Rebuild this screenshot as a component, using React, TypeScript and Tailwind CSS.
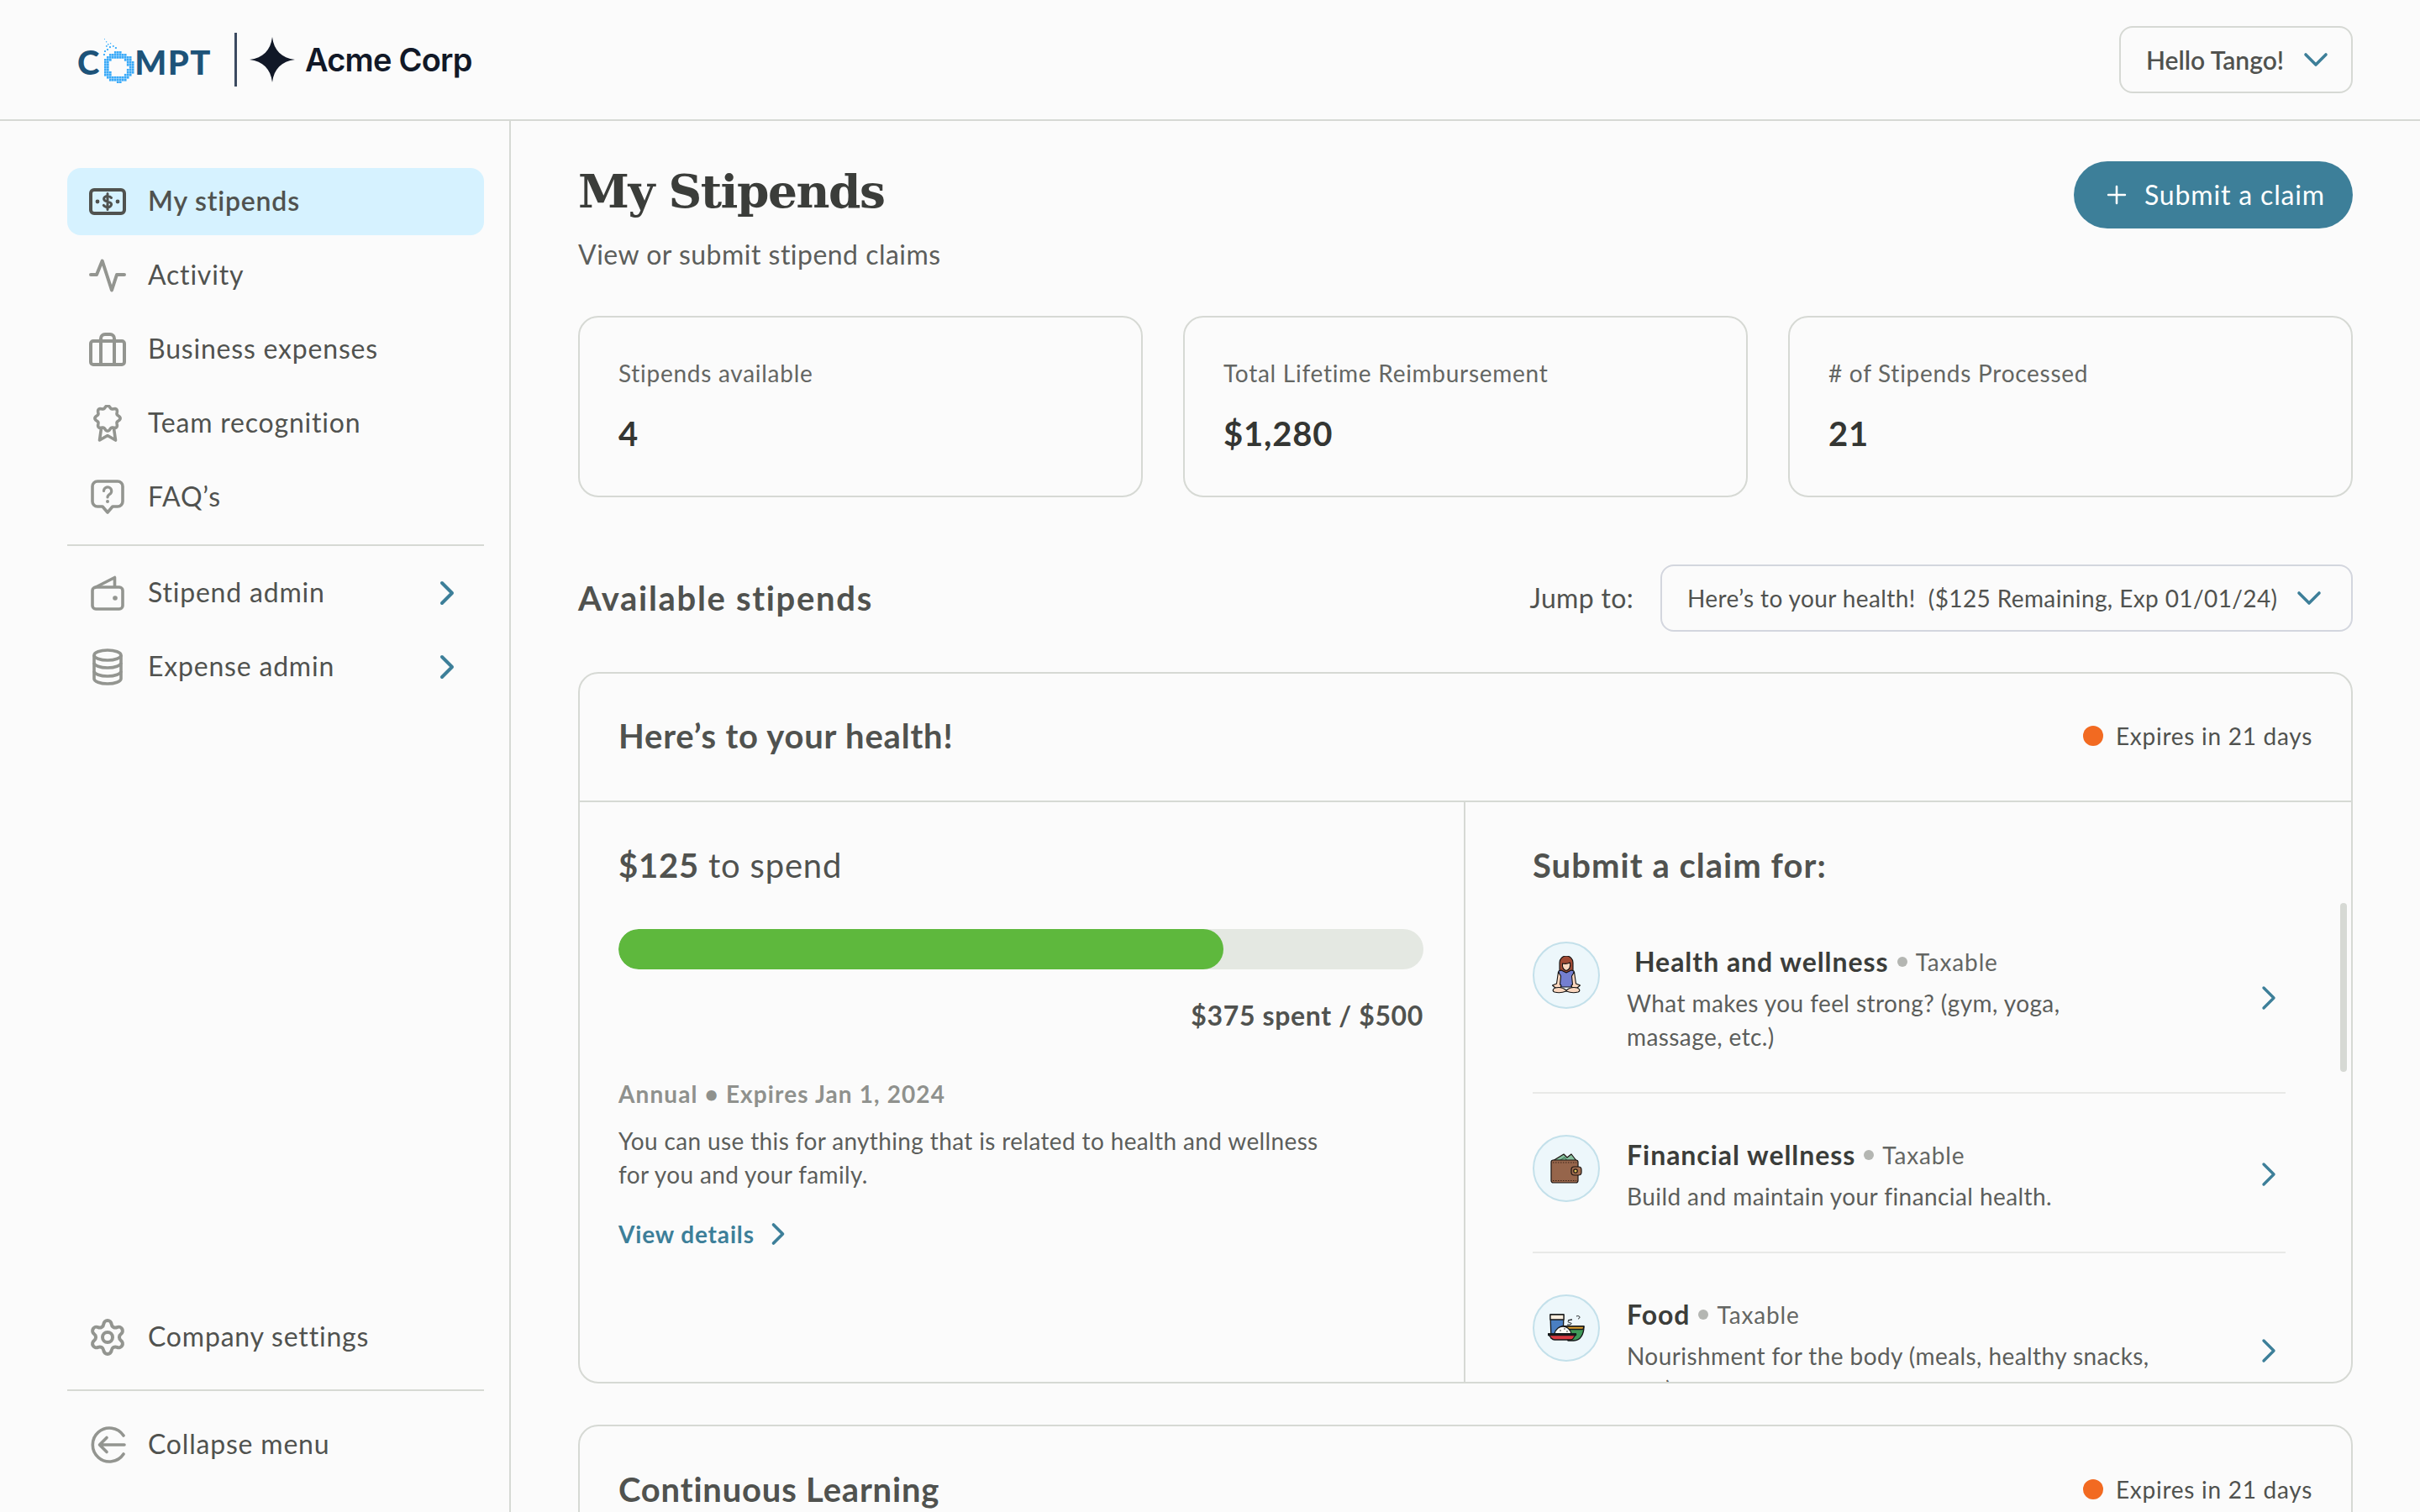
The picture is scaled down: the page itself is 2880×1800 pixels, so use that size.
import React from "react";
import { Settings, ChevronRight, ChevronDown, Plus } from "lucide-react";

const GREY = "#939590";

function MoneyIcon() {
  return (
    <svg width="44" height="32" viewBox="0 0 44 32" fill="none">
      <rect x="2" y="2" width="40" height="28" rx="4" stroke="#50524f" strokeWidth="4" />
      <circle cx="10" cy="16" r="2.400" fill="#50524f" />
      <circle cx="34" cy="16" r="2.400" fill="#50524f" />
      <path d="M26.500 11.500c-1-1.300-2.600-2-4.500-2-2.500 0-4.400 1.300-4.400 3.300 0 4.400 9 2.200 9 6.500 0 2-2 3.300-4.600 3.300-2 0-3.700-.8-4.700-2.200M22 6.500v19" stroke="#50524f" strokeWidth="3" strokeLinecap="round" />
    </svg>
  );
}
function ActivityIcon() {
  return (
    <svg width="44" height="40" viewBox="0 0 44 40" fill="none">
      <path d="M2 19H9L15.700 2.500 27 37.500 33 19H42" stroke={GREY} strokeWidth="4" strokeLinecap="round" strokeLinejoin="round" />
    </svg>
  );
}
function CaseIcon() {
  return (
    <svg width="44" height="40" viewBox="0 0 44 40" fill="none">
      <rect x="2" y="10" width="40" height="28" rx="3" stroke={GREY} strokeWidth="4" />
      <path d="M14 38V7a5 5 0 0 1 5-5h6a5 5 0 0 1 5 5v31" stroke={GREY} strokeWidth="4" />
    </svg>
  );
}
function BadgeIcon() {
  const pts: string[] = [];
  for (let i = 0; i < 96; i++) {
    const a = (i / 96) * Math.PI * 2;
    const r = 13.600 + 1.500 * Math.cos(a * 8);
    pts.push(`${(17 + r * Math.sin(a)).toFixed(2)},${(16 + r * Math.cos(a)).toFixed(2)}`);
  }
  return (
    <svg width="34" height="44" viewBox="0 0 34 44" fill="none">
      <polygon points={pts.join(" ")} stroke={GREY} strokeWidth="3.600" strokeLinejoin="round" />
      <path d="M9.500 28 7.500 42 17 36.500 26.500 42 24.500 28" stroke={GREY} strokeWidth="3.600" strokeLinejoin="round" />
    </svg>
  );
}
function FaqIcon() {
  return (
    <svg width="40" height="42" viewBox="0 0 40 42" fill="none">
      <path d="M8 2h24a6 6 0 0 1 6 6v18a6 6 0 0 1-6 6h-6l-6 7-6-7H8a6 6 0 0 1-6-6V8a6 6 0 0 1 6-6Z" stroke={GREY} strokeWidth="3.600" strokeLinejoin="round" />
      <path d="M15.500 13.500a4.600 4.600 0 1 1 7.300 3.700c-1.700 1.100-2.800 2-2.800 3.800" stroke={GREY} strokeWidth="3.200" strokeLinecap="round" />
      <circle cx="20" cy="26" r="2" fill={GREY} />
    </svg>
  );
}
function WalletIcon() {
  return (
    <svg width="40" height="42" viewBox="0 0 40 42" fill="none">
      <rect x="2" y="14" width="36" height="26" rx="4" stroke={GREY} strokeWidth="3.600" />
      <path d="M4 15 28.500 2.500V14" stroke={GREY} strokeWidth="3.600" strokeLinejoin="round" />
      <circle cx="29" cy="27" r="2.800" fill={GREY} />
    </svg>
  );
}
function DbIcon() {
  return (
    <svg width="36" height="44" viewBox="0 0 36 44" fill="none" stroke={GREY} strokeWidth="3.600">
      <ellipse cx="18" cy="8" rx="16" ry="6" />
      <path d="M2 8v28c0 3.300 7.200 6 16 6s16-2.700 16-6V8" />
      <path d="M2 17c0 3.300 7.200 6 16 6s16-2.700 16-6" />
      <path d="M2 27c0 3.300 7.200 6 16 6s16-2.700 16-6" />
    </svg>
  );
}
function CollapseIcon() {
  return (
    <svg width="44" height="44" viewBox="0 0 44 44" fill="none" stroke={GREY} strokeWidth="3.600" strokeLinecap="round" strokeLinejoin="round">
      <path d="M41 11A20 20 0 1 0 41 33" />
      <path d="M42 22H13M21 13.500 12.500 22 21 30.500" />
    </svg>
  );
}

function Woman() {
  return (
    <svg width="36" height="46" viewBox="0 0 36 46" fill="none" stroke="#111" strokeWidth="1.100" strokeLinejoin="round">
      <path d="M10 20V8a8 8 0 0 1 16 0v12Z" fill="#a04a34" />
      <path d="M13.500 9c2 .5 6 .5 9-1 .7 4 .3 8-4.500 9.500C14.500 16.500 13 13 13.500 9Z" fill="#fbd7bf" />
      <path d="M9 18 12 17 18 20 24 17 27 18 27.500 34 24 37H12L8.500 34Z" fill="#747fd0" />
      <path d="M8.500 19 6.500 33 1.500 35 5 38h6l1-3-1.500-1 1-10ZM27.500 19l2 14 5 2-3.500 3h-6l-1-3 1.500-1-1-10Z" fill="#fbd7bf" />
      <path d="M5 38c-3 1-4 4-1 5 5 1.500 9 1 14-1 5 2 9 2.500 14 1 3-1 2-4-1-5-4-1-9-.5-13 3-4-3.500-9-4-13-3Z" fill="#fbd7bf" />
    </svg>
  );
}
function Purse() {
  return (
    <svg width="38" height="38" viewBox="0 0 38 38" fill="none" stroke="#1b1411" strokeWidth="1.200" strokeLinejoin="round">
      <path d="M3 10 16 2l4 4 5-4 7 9Z" fill="#86c09d" />
      <path d="M9 11 17 6l4 5" stroke="#3f7a5b" />
      <rect x="1" y="9" width="32" height="27" rx="2.500" fill="#96654b" />
      <path d="M3 12h28M3 33.500h28" stroke="#3b2518" strokeDasharray="1.500 1.500" />
      <rect x="25" y="17" width="12" height="10" rx="3.500" fill="#a26e50" />
      <circle cx="30" cy="22" r="2.200" fill="#e5c35a" />
    </svg>
  );
}
function FoodPic() {
  return (
    <svg width="44" height="34" viewBox="0 0 44 34" fill="none" stroke="#16181a" strokeWidth="1.300" strokeLinejoin="round">
      <path d="M3 1h16l-1 28H4Z" fill="#4a7fc2" />
      <path d="M3 1h16v6H3Z" fill="#fbeede" />
      <path d="M17 15h26c0 9-4 17-12 17H24Z" fill="#3f9a58" />
      <path d="M17 15h26l-1 3.500H18Z" fill="#e0a22e" />
      <path d="M24 8c1-1 5-1 5-1s-6 1-5 2.500 5 1 4 2.500-5 1-5 1M34 3c2-1 4 0 4 1s-1 2-2 2" fill="none" strokeWidth="1" />
      <path d="M8 24c1-6 6-9 10-9s9 3 10 9Z" fill="#fbfbf6" />
      <circle cx="15" cy="20" r=".8" fill="#333" stroke="none" />
      <circle cx="20" cy="18" r=".8" fill="#333" stroke="none" />
      <circle cx="23" cy="21" r=".8" fill="#333" stroke="none" />
      <path d="M0.500 24h33l-3 5c-1 1.500-2 2-3 2H8c-2 0-3-1-4-2Z" fill="#d93a42" />
      <path d="M0.500 24h33v1.500H0.500Z" fill="#7a1f28" />
    </svg>
  );
}

function ComptO() {
  const rects: React.ReactNode[] = [];
  const cx = 24;
  const cy = 35;
  for (let gx = 0; gx < 15; gx++) {
    for (let gy = 0; gy < 15; gy++) {
      const x = 1 + gx * 3;
      const y = 13 + gy * 3;
      const d = Math.hypot(x + 1.200 - cx, y + 1.200 - cy);
      if (d > 11.500 && d < 18.500) {
        rects.push(<rect key={`r${gx}-${gy}`} x={x} y={y} width="2.700" height="2.700" fill="#3aaaf8" />);
      }
    }
  }
  const specks: [number, number, number][] = [[7, 1, 1], [9, 4, 1.300], [11, 7, 1.500], [14, 6, 1.300], [9, 9, 1.700], [13, 10, 2], [17, 9, 1.800], [20, 11, 2], [10, 13, 2], [7, 15, 2], [6, 19, 2]];
  specks.forEach(([x, y, s], i) => rects.push(<rect key={`s${i}`} x={x} y={y} width={s} height={s} fill="#41b0fb" />));
  return (
    <svg width="44" height="54" viewBox="0 0 44 54" className="mb-[-5px] mx-[-1px]">
      {rects}
    </svg>
  );
}

function Logo() {
  return (
    <div className="flex items-center">
      <div className="flex items-end w-[160px] mb-[3px] [font-family:Lato,sans-serif] font-black text-[40px] leading-[40px] text-[#1d5379]">
        <span>C</span>
        <ComptO />
        <span className="tracking-[1.500px]">MPT</span>
      </div>
      <div className="w-[3px] h-[64px] bg-[#3b4a60] ml-[27px]" />
      <svg width="54" height="54" viewBox="0 0 54 54" className="ml-[15px]">
        <path d="M27 0C29 16 38 25 54 27 38 29 29 38 27 54 25 38 16 29 0 27 16 25 25 16 27 0Z" fill="#111827" />
      </svg>
      <span className="ml-[12px] [font-family:Inter,sans-serif] font-semibold text-[38px] tracking-[-0.8px] leading-none text-[#111827]">Acme Corp</span>
    </div>
  );
}

function NavRow({ icon, label, active, chevron }: { icon: React.ReactNode; label: string; active?: boolean; chevron?: boolean }) {
  return (
    <div className={`flex items-center h-[80px] rounded-[16px] ${active ? "bg-[#d6f2ff] font-semibold" : ""}`}>
      <div className="w-[96px] flex justify-center shrink-0">{icon}</div>
      <span className="text-[32px] tracking-[0.025em] pb-[2px] text-[#50524f] flex-1 leading-none">{label}</span>
      {chevron && <ChevronRight size={48} strokeWidth={2} color="#3d7f99" className="mr-[20px]" />}
    </div>
  );
}

function Sidebar() {
  return (
    <aside className="w-[608px] shrink-0 border-r-2 border-[#d6d9d4] h-[1656px] flex flex-col px-[80px] pr-[30px] pt-[56px]">
      <div className="flex flex-col gap-[8px]">
        <NavRow icon={<MoneyIcon />} label="My stipends" active />
        <NavRow icon={<ActivityIcon />} label="Activity" />
        <NavRow icon={<CaseIcon />} label="Business expenses" />
        <NavRow icon={<BadgeIcon />} label="Team recognition" />
        <NavRow icon={<FaqIcon />} label="FAQ’s" />
      </div>
      <div className="h-[2px] bg-[#d6d9d4] mt-[16px] mb-[16px]" />
      <div className="flex flex-col gap-[8px]">
        <NavRow icon={<WalletIcon />} label="Stipend admin" chevron />
        <NavRow icon={<DbIcon />} label="Expense admin" chevron />
      </div>
      <div className="mt-auto">
        <NavRow icon={<Settings size={48} strokeWidth={2} color={GREY} />} label="Company settings" />
        <div className="h-[2px] bg-[#d6d9d4] mt-[22px] mb-[24px]" />
        <NavRow icon={<CollapseIcon />} label="Collapse menu" />
        <div className="h-[40px]" />
      </div>
    </aside>
  );
}

function Stat({ label, value }: { label: string; value: string }) {
  return (
    <div className="flex-1 h-[216px] rounded-[24px] border-2 border-[#d6d9d4] px-[46px] pt-[46px]">
      <div className="text-[28px] tracking-[0.026em] leading-[40px] text-[#646663]">{label}</div>
      <div className="text-[40px] tracking-[0.02em] leading-[48px] font-bold text-[#343633] mt-[28px]">{value}</div>
    </div>
  );
}

function Expires() {
  return (
    <div className="flex items-center text-[28px] tracking-[0.026em] text-[#50524f]">
      <span className="w-[24px] h-[24px] rounded-full bg-[#f26a21] mr-[15px]" />
      Expires in 21 days
    </div>
  );
}

function ClaimRow({ pic, title, lines, nudge, last }: { pic: React.ReactNode; title: string; lines: string[]; nudge?: boolean; last?: boolean }) {
  return (
    <div className={`flex items-center justify-between pt-[49px] pb-[46px] ${last ? "" : "border-b-2 border-[#e8e9e7]"}`}>
      <div className="flex items-start">
        <div className="w-[80px] h-[80px] rounded-full border-2 border-[#c3e0ea] bg-[#edf7fb] flex items-center justify-center shrink-0">{pic}</div>
        <div className="ml-[32px]">
          <div className={`flex items-center h-[48px] ${nudge ? "pl-[9px]" : ""}`}>
            <span className="text-[32px] tracking-[0.03em] font-bold text-[#3b3d3a]">{title}</span>
            <span className="w-[12px] h-[12px] rounded-full bg-[#b4b6b2] mx-[10px]" />
            <span className="text-[28px] tracking-[0.03em] text-[#646663]">Taxable</span>
          </div>
          <div className="mt-[5px] text-[28px] tracking-[0.015em] leading-[40px] text-[#5c5e5b] whitespace-nowrap">
            {lines.map((l) => (
              <div key={l}>{l}</div>
            ))}
          </div>
        </div>
      </div>
      <ChevronRight size={48} strokeWidth={1.700} color="#3d7f99" className="mr-[-4px] shrink-0" />
    </div>
  );
}

function StipendCard() {
  return (
    <div className="mt-[48px] h-[847px] rounded-[24px] border-2 border-[#d6d9d4] flex flex-col overflow-hidden">
      <div className="h-[153px] shrink-0 border-b-2 border-[#d6d9d4] px-[46px] pb-[4px] flex items-center justify-between">
        <h2 className="text-[40px] tracking-[0.02em] font-bold text-[#50524f]">Here’s to your health!</h2>
        <Expires />
      </div>
      <div className="flex h-[692px] overflow-hidden">
        <div className="w-[1054px] shrink-0 border-r-2 border-[#d6d9d4] pl-[46px] pr-[48px] pt-[51px]">
          <div className="text-[40px] tracking-[0.02em] leading-[48px] text-[#50524f]">
            <span className="font-bold">$125</span> to spend
          </div>
          <div className="mt-[52px] h-[48px] rounded-full bg-[#e4e8e2] overflow-hidden">
            <div className="h-full w-[75.200%] rounded-full bg-[#5eb83d]" />
          </div>
          <div className="mt-[33px] text-right text-[32px] tracking-[0.02em] leading-[44px] font-bold text-[#50524f]">$375 spent / $500</div>
          <div className="mt-[51px] text-[28px] tracking-[0.04em] leading-[40px] font-bold text-[#8f918d]">Annual • Expires Jan 1, 2024</div>
          <p className="mt-[16px] text-[28px] tracking-[0.013em] leading-[40px] text-[#5c5e5b]">
            You can use this for anything that is related to health and wellness
            <br />
            for you and your family.
          </p>
          <div className="mt-[29px] flex items-center text-[28px] tracking-[0.03em] leading-[40px] font-bold text-[#3d7f99]">
            View details
            <ChevronRight size={44} strokeWidth={2} className="ml-[6px]" />
          </div>
        </div>
        <div className="relative flex-1 pt-[51px] overflow-hidden">
          <div className="pl-[80px] w-[976px]">
            <div className="text-[40px] tracking-[0.026em] leading-[48px] font-bold text-[#50524f]">Submit a claim for:</div>
            <div className="mt-[18px]">
              <ClaimRow pic={<Woman />} nudge title="Health and wellness" lines={["What makes you feel strong? (gym, yoga,", "massage, etc.)"]} />
              <ClaimRow pic={<Purse />} title="Financial wellness" lines={["Build and maintain your financial health."]} />
              <ClaimRow pic={<FoodPic />} last title="Food" lines={["Nourishment for the body (meals, healthy snacks,", "etc.)"]} />
            </div>
          </div>
          <div className="absolute right-[5px] top-[120px] w-[8px] h-[201px] rounded-full bg-[#d6d9d4]" />
        </div>
      </div>
    </div>
  );
}

export default function App() {
  return (
    <div className="w-full h-screen overflow-hidden bg-[#fbfbfb] [font-family:Lato,sans-serif] text-[#50524f]">
      <header className="h-[144px] border-b-2 border-[#d6d9d4] flex items-center justify-between pl-[92px] pr-[80px]">
        <Logo />
        <div className="w-[278px] h-[80px] rounded-[16px] border-2 border-[#d6d9d4] flex items-center justify-between pl-[30px] pr-[18px]">
          <span className="text-[30px] font-semibold text-[#50524f]">Hello Tango!</span>
          <ChevronDown size={48} strokeWidth={1.800} color="#3d7f99" />
        </div>
      </header>
      <div className="flex">
        <Sidebar />
        <main className="flex-1 pl-[80px] pr-[80px] pt-[48px] overflow-hidden h-[1656px]">
          <div className="flex items-start justify-between">
            <div>
              <h1 className="[font-family:'DejaVu_Serif',serif] font-bold text-[55px] leading-[72px] tracking-[-1.500px] text-[#3b3d3a]">My Stipends</h1>
              <p className="mt-[19px] text-[32px] tracking-[0.015em] leading-[40px] text-[#5c5e5b]">View or submit stipend claims</p>
            </div>
            <button className="w-[332px] h-[80px] rounded-full bg-[#3d7f99] text-white text-[32px] tracking-[0.026em] flex items-center pl-[34px]">
              <Plus size={34} strokeWidth={1.800} className="mr-[16px]" />
              Submit a claim
            </button>
          </div>
          <div className="mt-[53px] flex gap-[48px]">
            <Stat label="Stipends available" value="4" />
            <Stat label="Total Lifetime Reimbursement" value="$1,280" />
            <Stat label="# of Stipends Processed" value="21" />
          </div>
          <div className="mt-[80px] flex items-center justify-between">
            <h2 className="text-[40px] tracking-[0.042em] font-bold text-[#50524f]">Available stipends</h2>
            <div className="flex items-center">
              <span className="text-[32px] tracking-[0.01em] text-[#50524f] mr-[32px]">Jump to:</span>
              <div className="w-[824px] h-[80px] rounded-[16px] border-2 border-[#d3d6de] flex items-center justify-between pl-[30px] pr-[26px]">
                <span className="text-[28px] tracking-[0.014em] text-[#50524f] whitespace-pre">Here’s to your health!  ($125 Remaining, Exp 01/01/24)</span>
                <ChevronDown size={48} strokeWidth={1.800} color="#3d7f99" />
              </div>
            </div>
          </div>
          <StipendCard />
          <div className="mt-[49px] h-[300px] rounded-[24px] border-2 border-[#d6d9d4] px-[46px] pt-[51px] flex items-start justify-between">
            <h2 className="text-[40px] tracking-[0.02em] leading-[48px] font-bold text-[#50524f]">Continuous Learning</h2>
            <div className="h-[48px] flex items-center">
              <Expires />
            </div>
          </div>
        </main>
      </div>
    </div>
  );
}
